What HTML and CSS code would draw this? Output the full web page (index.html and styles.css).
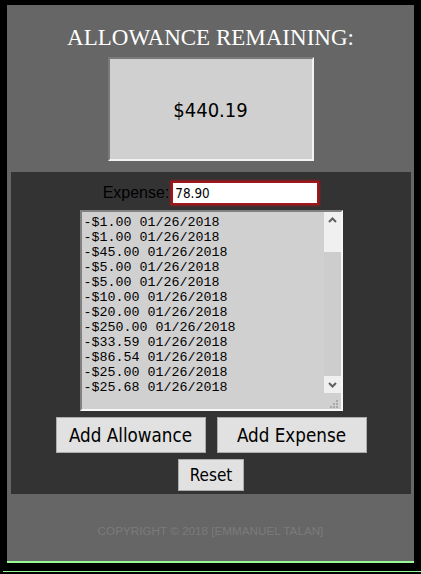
FILE: index.html
```html
<!DOCTYPE html>
<html lang="en">
<head>
<meta charset="utf-8">
<title>Allowance Tracker</title>
<link rel="stylesheet" href="styles.css">
</head>
<body>
<div class="page">
  <header class="summary">
    <h1 class="summary-title">ALLOWANCE REMAINING:</h1>
    <div class="balance">$440.19</div>
  </header>
  <main class="panel">
    <div class="expense-row">
      <label class="expense-label" for="expense">Expense:</label>
      <input class="expense-input" id="expense" type="text" value="78.90">
    </div>
    <div class="log">
      <textarea class="log-text" readonly>
-$1.00 01/26/2018
-$1.00 01/26/2018
-$45.00 01/26/2018
-$5.00 01/26/2018
-$5.00 01/26/2018
-$10.00 01/26/2018
-$20.00 01/26/2018
-$250.00 01/26/2018
-$33.59 01/26/2018
-$86.54 01/26/2018
-$25.00 01/26/2018
-$25.68 01/26/2018</textarea>
      <div class="log-side">
        <div class="scrollbar">
          <div class="sb-btn">
            <svg width="17" height="17" viewBox="0 0 17 17"><polyline points="5,10 8.5,6.5 12,10" fill="none" stroke="#606060" stroke-width="2"/></svg>
          </div>
          <div class="sb-track"><div class="sb-thumb"></div></div>
          <div class="sb-btn">
            <svg width="17" height="17" viewBox="0 0 17 17"><polyline points="5,7 8.5,10.5 12,7" fill="none" stroke="#606060" stroke-width="2"/></svg>
          </div>
        </div>
        <div class="grip">
          <svg width="17" height="16" viewBox="0 0 17 16">
            <rect x="12" y="7" width="2" height="2" fill="#a8a8a8"/>
            <rect x="9" y="10" width="2" height="2" fill="#a8a8a8"/>
            <rect x="12" y="10" width="2" height="2" fill="#a8a8a8"/>
            <rect x="6" y="13" width="2" height="2" fill="#a8a8a8"/>
            <rect x="9" y="13" width="2" height="2" fill="#a8a8a8"/>
            <rect x="12" y="13" width="2" height="2" fill="#a8a8a8"/>
          </svg>
        </div>
      </div>
    </div>
    <div class="actions">
      <button class="btn btn-lg" type="button">Add Allowance</button>
      <button class="btn btn-lg" type="button">Add Expense</button>
    </div>
    <div class="actions">
      <button class="btn btn-sm" type="button">Reset</button>
    </div>
  </main>
  <footer class="footer">COPYRIGHT © 2018 [EMMANUEL TALAN]</footer>
</div>
<div class="rule"></div>
</body>
</html>
```
FILE: styles.css
```css
html, body {
  margin: 0;
  padding: 0;
  background: #000;
}
body {
  padding-top: 5px;
  font-family: "Liberation Sans", Arial, sans-serif;
}
.page {
  margin: 0 7px;
  background: #666666;
  border-bottom: 2px solid #98fb98;
}
.summary {
  padding-top: 20px;
  display: flex;
  flex-direction: column;
  align-items: center;
}
.summary-title {
  margin: 0;
  font-family: "Liberation Serif", "Times New Roman", serif;
  font-weight: normal;
  font-size: 23px;
  line-height: 26px;
  color: #ffffff;
  text-align: center;
}
.balance {
  margin-top: 6px;
  box-sizing: border-box;
  width: 206px;
  height: 104px;
  padding-top: 2px;
  border: 2px solid;
  border-color: #7a7a7a #f2f2f2 #f2f2f2 #7a7a7a;
  background: #d0d0d0;
  display: flex;
  align-items: center;
  justify-content: center;
  font-family: "DejaVu Sans Condensed", "DejaVu Sans", sans-serif;
  font-stretch: condensed;
  font-size: 20px;
  color: #000;
}
.panel {
  margin: 11px 3px 0 4px;
  background: #333333;
  padding: 9px 0 3px;
  display: flex;
  flex-direction: column;
  align-items: center;
}
.expense-row {
  display: flex;
  align-items: center;
  height: 24px;
}
.expense-label {
  font-family: "Liberation Sans", Arial, sans-serif;
  font-size: 16px;
  color: #000;
  margin-right: 2px;
}
.expense-input {
  box-sizing: border-box;
  width: 148px;
  height: 24px;
  margin: 0;
  padding: 0 2px;
  border: 2px solid #a3151a;
  box-shadow: 0 0 2px 1px rgba(190, 20, 20, 0.55);
  background: #fff;
  outline: none;
  font-family: "DejaVu Sans Condensed", "DejaVu Sans", sans-serif;
  font-stretch: condensed;
  font-size: 13.33px;
  color: #000;
}
.log {
  margin-top: 5px;
  display: flex;
  border: 2px solid;
  border-color: #808080 #f7f7f7 #f7f7f7 #808080;
  background: #d0d0d0;
}
.log-text {
  box-sizing: border-box;
  width: 242px;
  height: 197px;
  margin: 0;
  padding: 3px 2px 2px 2px;
  border: none;
  outline: none;
  resize: none;
  overflow: hidden;
  background: #d0d0d0;
  font-family: "Liberation Mono", "Courier New", monospace;
  font-size: 13.33px;
  line-height: normal;
  color: #000;
}
.log-side {
  width: 17px;
  display: flex;
  flex-direction: column;
}
.scrollbar {
  display: flex;
  flex-direction: column;
  height: 181px;
  background: #f0f0f0;
}
.sb-btn {
  height: 17px;
  display: flex;
}
.sb-track {
  flex: 1;
  display: flex;
  flex-direction: column;
  justify-content: flex-end;
}
.sb-thumb {
  height: 124px;
  background: #cdcdcd;
}
.grip {
  height: 16px;
  display: flex;
}
.actions {
  margin-top: 6px;
  display: flex;
  gap: 11px;
}
.btn {
  box-sizing: border-box;
  margin: 0;
  padding: 0;
  background: #e1e1e1;
  border: 1px solid #adadad;
  color: #000;
  font-family: "DejaVu Sans Condensed", "DejaVu Sans", sans-serif;
  font-stretch: condensed;
}
.btn-lg {
  width: 150px;
  height: 36px;
  font-size: 18.67px;
}
.btn-sm {
  width: 66px;
  height: 32px;
  font-size: 17px;
}
.footer {
  padding: 30px 0 23px;
  text-align: center;
  font-family: "Liberation Sans", Arial, sans-serif;
  font-size: 11.7px;
  line-height: 14px;
  color: #7b7b7b;
}
.rule {
  margin: 8px 0 0 3px;
  height: 1px;
  background: #98fb98;
}
```
